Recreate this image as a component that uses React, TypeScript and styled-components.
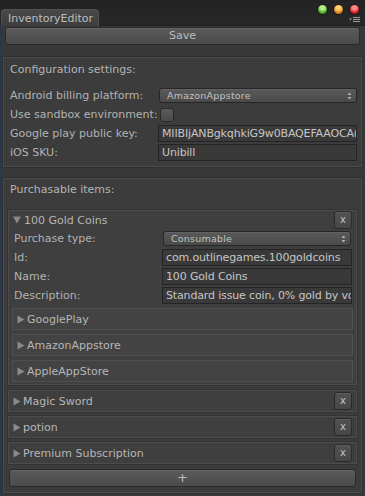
import React from 'react';
import styled, { createGlobalStyle } from 'styled-components';

const Global = createGlobalStyle`
  html, body { margin: 0; padding: 0; background: #383838; }
  body { font-family: 'DejaVu Sans', 'Liberation Sans', sans-serif; font-size: 11px; color: #b4b4b4; }
`;

const Window = styled.div`
  width: 365px;
  height: 496px;
  background: #383838;
  overflow: hidden;
  box-shadow: inset 1px 0 0 #2a3550;
`;

const TitleBar = styled.div`
  height: 25px;
  background: linear-gradient(#232323, #282828);
  display: flex;
  align-items: flex-end;
  border-bottom: 1px solid #1e1e1e;
  padding-left: 1px;
`;

const Tab = styled.div`
  width: 98px;
  height: 17px;
  line-height: 17px;
  background: linear-gradient(#484848, #3e3e3e);
  border: 1px solid #505050;
  border-bottom: none;
  border-radius: 4px 4px 0 0;
  padding-left: 6px;
  box-sizing: border-box;
  color: #bcbcbc;
  font-size: 11px;
  margin-bottom: -1px;
`;

const Controls = styled.div`
  margin-left: auto;
  margin-right: 6px;
  display: flex;
  flex-direction: column;
  align-items: flex-end;
  align-self: stretch;
  padding-top: 5px;
`;

const Dots = styled.div`
  display: flex;
  gap: 7px;
`;

const Dot = styled.div<{ $c: string; $h: string }>`
  width: 9px;
  height: 9px;
  border-radius: 50%;
  background: radial-gradient(circle at 50% 30%, ${p => p.$h} 0 25%, ${p => p.$c} 70%);
  box-shadow: 0 0 0 1px rgba(0, 0, 0, 0.35);
`;

const MenuIcon = styled.svg`
  margin-top: 3px;
  margin-right: -1px;
`;

const ButtonBar = styled.button`
  display: block;
  box-sizing: border-box;
  height: 18px;
  border: 1px solid #2a2a2a;
  border-radius: 3px;
  background: linear-gradient(#5a5a5a, #4b4b4b);
  box-shadow: inset 0 1px 0 #646464;
  color: #bdbdbd;
  font-family: inherit;
  font-size: 11px;
  padding: 0;
  line-height: 16px;
`;

const SaveButton = styled(ButtonBar)`
  width: 355px;
  margin: 1px 0 0 5px;
`;

const AddButton = styled(ButtonBar)`
  width: 347px;
  margin: 5px 0 0 1px;
  font-size: 13px;
`;

const Box = styled.div<{ $top: number; $h: number }>`
  box-sizing: border-box;
  margin: ${p => p.$top}px 0 0 3px;
  width: 359px;
  height: ${p => p.$h}px;
  background: #3c3c3c;
  border: 1px solid #4a4a4a;
  box-shadow: 0 0 0 1px #303030;
  padding: 0 4px 0 6px;
`;

const BoxTitle = styled.div<{ $h: number; $after: number }>`
  height: ${p => p.$h}px;
  line-height: ${p => p.$h}px;
  margin-bottom: ${p => p.$after}px;
`;

const Row = styled.div`
  display: flex;
  align-items: center;
  height: 19px;
`;

const Label = styled.div<{ $w: number }>`
  width: ${p => p.$w}px;
  flex: none;
  white-space: nowrap;
  color: #b2b2b2;
`;

const Popup = styled.div<{ $w: number }>`
  box-sizing: border-box;
  width: ${p => p.$w}px;
  height: 15px;
  border: 1px solid #262626;
  border-radius: 3px;
  background: linear-gradient(#5a5a5a, #4a4a4a);
  box-shadow: inset 0 1px 0 #626262;
  display: flex;
  align-items: center;
  padding: 0 4px 0 7px;
  font-size: 9.5px;
  color: #c2c2c2;
`;

const PopupText = styled.span`
  flex: 1;
  letter-spacing: 0.2px;
`;

const Field = styled.div<{ $w: number }>`
  box-sizing: border-box;
  width: ${p => p.$w}px;
  height: 17px;
  line-height: 15px;
  border: 1px solid #242424;
  background: #393939;
  padding-left: 3px;
  color: #c6c6c6;
  letter-spacing: -0.15px;
  white-space: nowrap;
  overflow: hidden;
`;

const Check = styled.div`
  width: 12px;
  height: 12px;
  margin-left: 2px;
  border: 1px solid #2a2a2a;
  border-radius: 3px;
  background: linear-gradient(#5c5c5c, #4a4a4a);
`;

const ItemList = styled.div`
  display: flex;
  flex-direction: column;
  margin-left: -2px;
  width: 349px;
`;

const Item = styled.div<{ $gap: number; $open?: boolean }>`
  box-sizing: border-box;
  margin-top: ${p => p.$gap}px;
  background: #3f3f3f;
  border: 1px solid #4c4c4c;
  box-shadow: 0 0 0 1px #333;
  padding: 0 3px ${p => (p.$open ? 2 : 0)}px 3px;
`;

const ItemHead = styled.div<{ $h: number }>`
  display: flex;
  align-items: center;
  height: ${p => p.$h}px;
  padding-left: 1px;
`;

const Foldout = styled.div`
  display: flex;
  align-items: center;
  flex: 1;
  color: #b6b6b6;
`;

const Arrow = styled.svg`
  flex: none;
  margin-right: 2px;
`;

const XButton = styled.div`
  box-sizing: border-box;
  width: 18px;
  height: 18px;
  border: 1px solid #2a2a2a;
  border-radius: 3px;
  background: linear-gradient(#525252, #474747);
  box-shadow: inset 0 1px 0 #5c5c5c;
  display: flex;
  align-items: center;
  justify-content: center;
  color: #c4c4c4;
  font-size: 10px;
  padding-bottom: 1px;
  margin-right: 1px;
`;

const ItemRows = styled.div`
  padding: 0 1px 0 2px;
`;

const SubBox = styled.div<{ $gap: number }>`
  box-sizing: border-box;
  height: 22px;
  margin-top: ${p => p.$gap}px;
  background: #434343;
  border: 1px solid #4f4f4f;
  display: flex;
  align-items: center;
  padding-left: 4px;
  color: #b6b6b6;
`;

const Updown = () => (
  <svg width="5" height="8" viewBox="0 0 5 8">
    <path d="M0.5 3 L2.5 0.5 L4.5 3 Z M0.5 5 L2.5 7.5 L4.5 5 Z" fill="#b0b0b0" />
  </svg>
);

const Fold = ({ open }: { open?: boolean }) =>
  open ? (
    <Arrow width="9" height="8" viewBox="0 0 9 8">
      <path d="M0 0.5 L8 0.5 L4 7.5 Z" fill="#8a8a8a" />
    </Arrow>
  ) : (
    <Arrow width="8" height="9" viewBox="0 0 8 9">
      <path d="M0.5 0.5 L7.5 4.5 L0.5 8.5 Z" fill="#8a8a8a" />
    </Arrow>
  );

const App: React.FC = () => {
  const collapsed = ['Magic Sword', 'potion', 'Premium Subscription'];
  return (
    <Window>
      <Global />
      <TitleBar>
        <Tab>InventoryEditor</Tab>
        <Controls>
          <Dots>
            <Dot $c="#3e9e22" $h="#b8f08a" />
            <Dot $c="#d07a12" $h="#ffd070" />
            <Dot $c="#c4141c" $h="#ff8a8a" />
          </Dots>
          <MenuIcon width="11" height="6" viewBox="0 0 11 6">
            <path d="M0 1.5 L3 1.5 L1.5 3.5 Z" fill="#9a9a9a" />
            <rect x="4" y="0" width="7" height="1" fill="#9a9a9a" />
            <rect x="4" y="2" width="7" height="1" fill="#9a9a9a" />
            <rect x="4" y="4" width="7" height="1" fill="#9a9a9a" />
          </MenuIcon>
        </Controls>
      </TitleBar>
      <SaveButton>Save</SaveButton>

      <Box $top={12} $h={110}>
        <BoxTitle $h={24} $after={4}>Configuration settings:</BoxTitle>
        <Row>
          <Label $w={149}>Android billing platform:</Label>
          <Popup $w={198}>
            <PopupText>AmazonAppstore</PopupText>
            <Updown />
          </Popup>
        </Row>
        <Row>
          <Label $w={148}>Use sandbox environment:</Label>
          <Check />
        </Row>
        <Row>
          <Label $w={148}>Google play public key:</Label>
          <Field $w={199}>MIIBIjANBgkqhkiG9w0BAQEFAAOCA(</Field>
        </Row>
        <Row>
          <Label $w={148}>iOS SKU:</Label>
          <Field $w={199}>Unibill</Field>
        </Row>
      </Box>

      <Box $top={11} $h={315}>
        <BoxTitle $h={21} $after={10}>Purchasable items:</BoxTitle>
        <ItemList>
          <Item $gap={0} $open>
            <ItemHead $h={18}>
              <Foldout>
                <Fold open />
                100 Gold Coins
              </Foldout>
              <XButton>x</XButton>
            </ItemHead>
            <ItemRows>
              <Row>
                <Label $w={149}>Purchase type:</Label>
                <Popup $w={188}>
                  <PopupText>Consumable</PopupText>
                  <Updown />
                </Popup>
              </Row>
              <Row>
                <Label $w={148}>Id:</Label>
                <Field $w={190}>com.outlinegames.100goldcoins</Field>
              </Row>
              <Row>
                <Label $w={148}>Name:</Label>
                <Field $w={190}>100 Gold Coins</Field>
              </Row>
              <Row>
                <Label $w={148}>Description:</Label>
                <Field $w={190}>Standard issue coin, 0% gold by vo</Field>
              </Row>
            </ItemRows>
            {['GooglePlay', 'AmazonAppstore', 'AppleAppStore'].map((s, i) => (
              <SubBox key={s} $gap={i === 0 ? 3 : 4}>
                <Fold />
                {s}
              </SubBox>
            ))}
          </Item>
          {collapsed.map(name => (
            <Item key={name} $gap={name === 'Magic Sword' ? 5 : 4}>
              <ItemHead $h={20}>
                <Foldout>
                  <Fold />
                  {name}
                </Foldout>
                <XButton>x</XButton>
              </ItemHead>
            </Item>
          ))}
          <AddButton>+</AddButton>
        </ItemList>
      </Box>
    </Window>
  );
};

export default App;
